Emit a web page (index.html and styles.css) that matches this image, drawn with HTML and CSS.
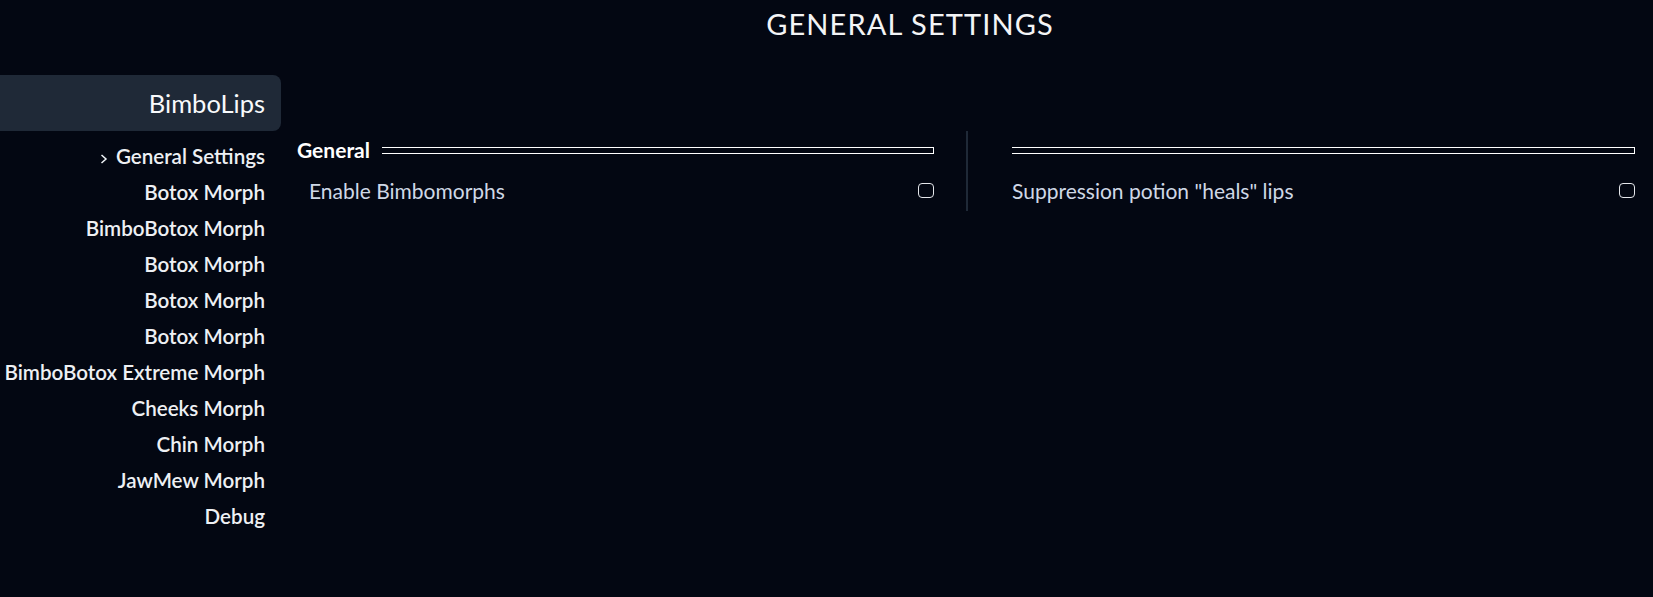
FILE: index.html
```html
<!DOCTYPE html>
<html lang="en">
<head>
<meta charset="utf-8">
<title>General Settings</title>
<link rel="stylesheet" href="styles.css">
</head>
<body>
<header class="page-title">GENERAL SETTINGS</header>
<div class="layout">
  <nav class="sidebar">
    <div class="mod-name">BimboLips</div>
    <ul class="pages">
      <li class="page active"><svg class="chev" width="8" height="12" viewBox="0 0 8 12"><polyline points="1.5,2 6,6 1.5,10" fill="none" stroke="#f1f5f9" stroke-width="1.5"/></svg>General Settings</li>
      <li class="page">Botox Morph</li>
      <li class="page">BimboBotox Morph</li>
      <li class="page">Botox Morph</li>
      <li class="page">Botox Morph</li>
      <li class="page">Botox Morph</li>
      <li class="page">BimboBotox Extreme Morph</li>
      <li class="page">Cheeks Morph</li>
      <li class="page">Chin Morph</li>
      <li class="page">JawMew Morph</li>
      <li class="page">Debug</li>
    </ul>
  </nav>
  <main class="content">
    <section class="column column-left">
      <div class="section-head">
        <span class="section-title">General</span>
        <span class="rule"></span>
      </div>
      <div class="option indented">
        <span class="option-label">Enable Bimbomorphs</span>
        <span class="checkbox"></span>
      </div>
    </section>
    <section class="column column-right">
      <div class="section-head">
        <span class="rule"></span>
      </div>
      <div class="option">
        <span class="option-label">Suppression potion "heals" lips</span>
        <span class="checkbox"></span>
      </div>
    </section>
  </main>
</div>
</body>
</html>
```

FILE: styles.css
```css
html, body {
  margin: 0;
  padding: 0;
  background: #030712;
  height: 100%;
}
body {
  font-family: Lato, "Open Sans", sans-serif;
  color: #e5e7eb;
}
.page-title {
  padding: 7px 0 0 167px;
  text-align: center;
  font-size: 29px;
  line-height: 1.2;
  color: #f3f4f6;
  letter-spacing: 1.1px;
}
.layout {
  display: flex;
  margin-top: 33px;
}
.sidebar {
  width: 281px;
  flex: none;
}
.mod-name {
  height: 56px;
  line-height: 56px;
  background: #1f2937;
  border-radius: 0 8px 8px 0;
  text-align: right;
  padding-right: 16px;
  font-size: 25.5px;
  color: #f8fafc;
}
.pages {
  list-style: none;
  margin: 7px 0 0;
  padding: 0 16px 0 0;
  text-align: right;
}
.page {
  font-size: 20.6px;
  line-height: 36px;
  font-weight: 600;
  color: #eef0f4;
  white-space: nowrap;
}
.chev {
  margin-right: 8px;
  vertical-align: -1px;
}
.content {
  flex: 1;
  display: grid;
  grid-template-columns: 1fr 1fr;
  align-self: flex-start;
  margin-top: 56px;
  padding: 0 18px 0 16px;
}
.column {
  padding-top: 6px;
  padding-bottom: 8px;
}
.column-left {
  padding-right: 32px;
}
.column-right {
  border-left: 2px solid #1f2937;
  padding-left: 44px;
}
.section-head {
  display: flex;
  align-items: center;
  gap: 12px;
  height: 25px;
}
.section-title {
  font-size: 21px;
  font-weight: 700;
  color: #ffffff;
}
.rule {
  flex: 1;
  height: 5px;
  border: 1px solid #ffffff;
  border-left: none;
  margin-top: 2px;
}
.option {
  display: flex;
  align-items: center;
  justify-content: space-between;
  margin-top: 16px;
  line-height: 25px;
}
.indented {
  padding-left: 12px;
}
.option-label {
  font-size: 21px;
  color: #cfd8e6;
}
.checkbox {
  width: 14px;
  height: 13px;
  border: 1px solid #e5e7eb;
  border-radius: 4px;
}
```
